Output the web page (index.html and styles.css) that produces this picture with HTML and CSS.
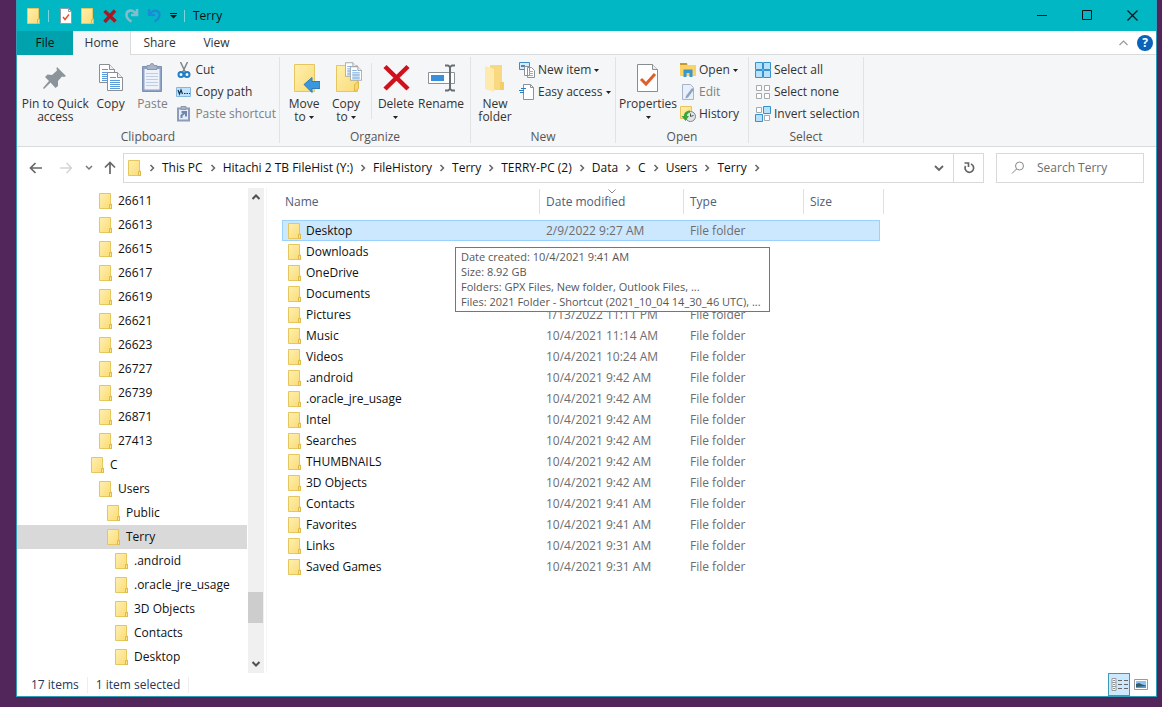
FILE: index.html
```html
<!DOCTYPE html>
<html lang="en">
<head>
    <meta charset="UTF-8">
    <meta name="viewport" content="width=device-width, initial-scale=1.0">
    <title>Terry</title>
    <link rel="stylesheet" href="styles.css">
</head>
<body>
    <svg class="sprite" aria-hidden="true">
        <linearGradient id="fold" x1="0" y1="0" x2="1" y2="1">
            <stop offset="0" stop-color="#fff0b0"/>
            <stop offset="1" stop-color="#fadb74"/>
        </linearGradient>
        <symbol id="folder" viewBox="0 0 14 16">
            <path d="M.5 .5h11v10.500h1v4.500H.5z" fill="url(#fold)" stroke="#e6c65f"/>
            <path d="M10.500 15.500v-4h2v4z" fill="#fbe38f" stroke="#dfb847"/>
        </symbol>
        <symbol id="chevron" viewBox="0 0 8 8">
            <path d="M2.500 1l3 3-3 3" fill="none" stroke="#666" stroke-width="1.500"/>
        </symbol>
        <symbol id="page" viewBox="0 0 16 19">
            <path d="M.5 .5h10l5 5v13H.5z" fill="#fff" stroke="#8b8f94"/>
            <path d="M10.500 .5v5h5" fill="#eee" stroke="#8b8f94"/>
            <path d="M3 5.500h6M3 8.500h10M3 10.500h10M3 12.500h10M3 14.500h10M3 16.500h10" stroke="#5b9bd8"/>
        </symbol>
        <symbol id="caret" viewBox="0 0 5 3">
            <path d="M0 0h5L2.500 3z" fill="#222"/>
        </symbol>
    </svg>

    <div class="window">
        <header class="titlebar">
            <svg class="folder" role="img"><use href="#folder"/></svg>
            <span class="title-sep first"></span>
            <button class="qat" aria-label="Properties">
                <svg width="14" height="16" viewBox="0 0 14 16"><path d="M1.500 .5h8l3 3v12h-11z" fill="#fff" stroke="#8ba0a8"/><path d="M9.500 .5v3h3" fill="none" stroke="#8ba0a8"/><path d="M4 9l2 2.500 4-5" fill="none" stroke="#e0552a" stroke-width="1.500"/></svg>
            </button>
            <button class="qat" aria-label="New folder"><svg class="folder"><use href="#folder"/></svg></button>
            <button class="qat" aria-label="Delete">
                <svg width="14" height="14" viewBox="0 0 14 14"><path d="M1.500 2l11 10.500M12 1.500L1.500 13" stroke="#a81824" stroke-width="3.500"/></svg>
            </button>
            <button class="qat" aria-label="Redo">
                <svg width="14" height="15" viewBox="0 0 14 15"><path d="M12 1v6H6M11.500 6.500C7 0 1.500 2.500 1.500 7c0 3 2 5 5 6.500" fill="none" stroke="#85bccb" stroke-width="2.600"/></svg>
            </button>
            <button class="qat" aria-label="Undo">
                <svg width="14" height="15" viewBox="0 0 14 15"><path d="M2 1v6h6M2.500 6.500C7 0 12.500 2.500 12.500 7c0 3-2 5-5 6.500" fill="none" stroke="#1b8bd6" stroke-width="2.200"/></svg>
            </button>
            <button class="qat last" aria-label="Customize toolbar">
                <svg width="7" height="6" viewBox="0 0 7 6"><path d="M0 .5h7" stroke="#111"/><path d="M0 2h7L3.500 5.500z" fill="#111"/></svg>
            </button>
            <span class="title-sep"></span>
            <span class="title">Terry</span>
            <button class="win-btn" aria-label="Minimize"><svg width="11" height="11"><path d="M0 5.500h10" stroke="#111"/></svg></button>
            <button class="win-btn" aria-label="Maximize"><svg width="11" height="11"><path d="M.5 .5h9v9h-9z" fill="none" stroke="#111"/></svg></button>
            <button class="win-btn" aria-label="Close"><svg width="11" height="11"><path d="M.5 .5l10 10M10.500 .5l-10 10" stroke="#111" stroke-width="1.200"/></svg></button>
        </header>

        <nav class="tabs">
            <button class="tab file">File</button>
            <button class="tab active">Home</button>
            <button class="tab">Share</button>
            <button class="tab">View</button>
            <button class="collapse" aria-label="Collapse ribbon"><svg width="9" height="6"><path d="M.5 5l4-4 4 4" fill="none" stroke="#999" stroke-width="1.200"/></svg></button>
            <button class="help" aria-label="Help">?</button>
        </nav>

        <section class="ribbon">
            <div class="group clipboard">
                <div class="tools">
                    <button class="big pin">
                        <svg width="32" height="32" viewBox="0 0 32 32"><path d="M18 5l9 9-2 1-2-.5-4 4.500 0 5-2.500 2-5-5.500L5 27l-1-1 6-7-4-4 2.500-2.500 4.500.5 5-4.500-.5-2z" fill="#8b949b"/></svg>
                        <span>Pin to Quick<br>access</span>
                    </button>
                    <button class="big">
                        <svg width="32" height="32" viewBox="0 0 32 32"><use href="#page" x="4" y="2" width="16" height="19"/><use href="#page" x="12" y="10" width="16" height="19"/></svg>
                        <span>Copy</span>
                    </button>
                    <button class="big disabled">
                        <svg width="32" height="32" viewBox="0 0 32 32"><path d="M6.500 4.500h19v25h-19z" fill="#8fa3c4" stroke="#7e90b2"/><path d="M8.500 7h15v20.500h-15z" fill="#eef2fa"/><path d="M11 3.500h3a2 2 0 0 1 4 0h3v4H11z" fill="#a9b4c6" stroke="#8d98ac"/><path d="M10 11.500h12M10 14.500h12M10 17.500h12M10 20.500h12M10 23.500h12" stroke="#c0ccdf"/></svg>
                        <span>Paste</span>
                    </button>
                    <div class="smalls">
                        <button class="small">
                            <svg width="16" height="16" viewBox="0 0 16 16"><path d="M4.500 0l5 10.500M11.500 0l-5 10.500" stroke="#7d858c" stroke-width="1.500"/><ellipse cx="5" cy="12.500" rx="2.500" ry="2.500" fill="none" stroke="#1e7fc6" stroke-width="2"/><ellipse cx="11" cy="12.500" rx="2.500" ry="2.500" fill="none" stroke="#1e7fc6" stroke-width="2"/></svg>
                            Cut
                        </button>
                        <button class="small">
                            <svg width="16" height="16" viewBox="0 0 16 16"><path d="M.5 3.500h14v9H.5z" fill="#c0e2fa" stroke="#82b8e0"/><path d="M2 6l1.500 4L5 6l1.500 4" fill="none" stroke="#14344e" stroke-width="1.200"/><path d="M8 9.500h1.500M10.500 9.500H12M13 9.500h1" stroke="#14344e"/></svg>
                            Copy path
                        </button>
                        <button class="small disabled">
                            <svg width="16" height="16" viewBox="0 0 16 16"><path d="M2 2.500h11v12H2z" fill="#e8eef8" stroke="#8c9cbc" stroke-width="2"/><path d="M5 .5h5v3H5z" fill="#a9b4c6" stroke="#8d98ac"/><path d="M5.500 12V9.500L9 6.500M5.500 6h4.500v4.500" fill="none" stroke="#6f86b0" stroke-width="2"/></svg>
                            Paste shortcut
                        </button>
                    </div>
                </div>
                <div class="group-name">Clipboard</div>
            </div>

            <div class="group organize">
                <div class="tools">
                    <button class="big">
                        <svg width="32" height="32" viewBox="0 0 32 32"><path d="M6.500 2.500h20v27h-20z" fill="url(#fold)" stroke="#e6c65f"/><path d="M16 22.500l8-7v4h8v7h-8v4z" fill="#3a96dd" stroke="#2b7dbd"/></svg>
                        <span>Move<br>to <svg class="caret"><use href="#caret"/></svg></span>
                    </button>
                    <button class="big">
                        <svg width="32" height="32" viewBox="0 0 32 32"><path d="M6.500 3.500h21v26h-21z" fill="url(#fold)" stroke="#e6c65f"/><path d="M24.500 29.500v-7l4-3v7z" fill="#f7d774" stroke="#dfb847"/><use href="#page" x="15" y="0" width="12" height="15"/><use href="#page" x="20" y="4" width="12" height="15"/></svg>
                        <span>Copy<br>to <svg class="caret"><use href="#caret"/></svg></span>
                    </button>
                    <span class="tool-sep"></span>
                    <button class="big">
                        <svg width="32" height="32" viewBox="0 0 32 32"><path d="M5 4.500L28 27M28 4.500L5 27" stroke="#d0101c" stroke-width="4.500"/></svg>
                        <span>Delete<br><svg class="caret"><use href="#caret"/></svg></span>
                    </button>
                    <button class="big rename">
                        <svg width="32" height="32" viewBox="0 0 32 32"><path d="M3.500 10.500h26v11h-26z" fill="#fff" stroke="#8b9299"/><path d="M6 13h13v6H6z" fill="#3a8fdc"/><path d="M20 3.500h3l2 1.500 2-1.500h3M20 28.500h3l2-1.500 2 1.500h3M25 5v22" fill="none" stroke="#666d73" stroke-width="2"/></svg>
                        <span>Rename</span>
                    </button>
                </div>
                <div class="group-name">Organize</div>
            </div>

            <div class="group new">
                <div class="tools">
                    <button class="big">
                        <svg width="32" height="32" viewBox="0 0 32 32"><path d="M11 3h12v18l2 1v6H11z" fill="#f8d980"/><path d="M6 4l9 3v23l-9-3z" fill="#fdeaac"/><path d="M21 20h4v8h-4z" fill="#f3cd68"/></svg>
                        <span>New<br>folder</span>
                    </button>
                    <div class="smalls">
                        <button class="small">
                            <svg width="16" height="16" viewBox="0 0 16 16"><path d="M.5 .5h10v7H.5z" fill="#d6ecfb" stroke="#3e8cc7"/><path d="M2 3h4v2H2z" fill="#3e8cc7"/><path d="M5.500 4.500h5v9h-5zM8.500 5.500h4l3 3v7h-7z" fill="#fff" stroke="#8b9299"/><path d="M10 9.500h4M10 11.500h4M10 13.500h4" stroke="#d894a4"/></svg>
                            New item <svg class="caret"><use href="#caret"/></svg>
                        </button>
                        <button class="small">
                            <svg width="16" height="16" viewBox="0 0 16 16"><path d="M4.500 .5h7l3 3v12h-10z" fill="#fff" stroke="#8b9299"/><path d="M11.500 .5v3h3" fill="none" stroke="#8b9299"/><path d="M2 4.500h5M0 6.500h5M1 8.500h4" stroke="#2b7dbd"/></svg>
                            Easy access <svg class="caret"><use href="#caret"/></svg>
                        </button>
                    </div>
                </div>
                <div class="group-name">New</div>
            </div>

            <div class="group open">
                <div class="tools">
                    <button class="big properties">
                        <svg width="32" height="32" viewBox="0 0 32 32"><path d="M5.500 2.500h15l5 5v22h-20z" fill="#fff" stroke="#888d92"/><path d="M20.500 2.500v5h5" fill="#eee" stroke="#888d92"/><path d="M9 17l5 5 9-10" fill="none" stroke="#dd5f2c" stroke-width="3"/></svg>
                        <span>Properties<br><svg class="caret"><use href="#caret"/></svg></span>
                    </button>
                    <div class="smalls">
                        <button class="small">
                            <svg width="16" height="16" viewBox="0 0 16 16"><path d="M0 1h7l1 2h8v11H0z" fill="#f9d364"/><path d="M0 1h7v2H0z" fill="#c99634"/><path d="M3.500 15V7.500h9V15h-3v-4h-3v4z" fill="#3a96cd"/></svg>
                            Open <svg class="caret"><use href="#caret"/></svg>
                        </button>
                        <button class="small disabled">
                            <svg width="16" height="16" viewBox="0 0 16 16"><path d="M2.500 .5h8l3 3v12h-11z" fill="#e9eff8" stroke="#a5b3cc"/><path d="M6 12l6-8 2 1.500-6 8-2.500 1z" fill="#8ea4c4"/></svg>
                            Edit
                        </button>
                        <button class="small">
                            <svg width="16" height="16" viewBox="0 0 16 16"><path d="M.5 .5h11v12H.5z" fill="url(#fold)" stroke="#e6c65f"/><circle cx="10.500" cy="10.500" r="5" fill="#dfe5e7" stroke="#79858c"/><path d="M10.500 7.500v3l3-1" fill="none" stroke="#555"/><path d="M10 4.500C4 5 4 9 4 10H1.500l4 5 3.500-5H7c0-2 1-3 3-3.500z" fill="#3da43d"/></svg>
                            History
                        </button>
                    </div>
                </div>
                <div class="group-name">Open</div>
            </div>

            <div class="group select">
                <div class="tools">
                    <div class="smalls">
                        <button class="small">
                            <svg width="16" height="16" viewBox="0 0 16 16"><path d="M.5 .5h7v7h-7zM8.500 .5h7v7h-7zM.5 8.500h7v7h-7zM8.500 8.500h7v7h-7z" fill="#b8e2fb" stroke="#3592cf"/></svg>
                            Select all
                        </button>
                        <button class="small">
                            <svg width="16" height="16" viewBox="0 0 16 16"><path d="M1.500 1.500h5v5h-5zM9.500 1.500h5v5h-5zM1.500 9.500h5v5h-5zM9.500 9.500h5v5h-5z" fill="#fff" stroke="#a6a9ac"/></svg>
                            Select none
                        </button>
                        <button class="small">
                            <svg width="16" height="16" viewBox="0 0 16 16"><path d="M1.500 1.500h5v5h-5zM9.500 9.500h5v5h-5z" fill="#fff" stroke="#a6a9ac"/><path d="M8.500 .5h7v7h-7zM.5 8.500h7v7h-7z" fill="#b8e2fb" stroke="#3592cf"/></svg>
                            Invert selection
                        </button>
                    </div>
                </div>
                <div class="group-name">Select</div>
            </div>
        </section>

        <div class="navbar">
            <button class="nav-btn" aria-label="Back"><svg width="14" height="12" viewBox="0 0 14 12"><path d="M13 6H2M6.500 1l-5 5 5 5" fill="none" stroke="#666" stroke-width="1.700"/></svg></button>
            <button class="nav-btn forward" aria-label="Forward"><svg width="14" height="12" viewBox="0 0 14 12"><path d="M1 6h11M7.500 1l5 5-5 5" fill="none" stroke="#d5d5d5" stroke-width="1.500"/></svg></button>
            <button class="nav-btn recent" aria-label="Recent locations"><svg width="8" height="6" viewBox="0 0 8 6"><path d="M1 1l3 3 3-3" fill="none" stroke="#777" stroke-width="1.500"/></svg></button>
            <button class="nav-btn up" aria-label="Up"><svg width="12" height="14" viewBox="0 0 12 14"><path d="M6 13V2M1 6.500l5-5 5 5" fill="none" stroke="#666" stroke-width="1.700"/></svg></button>
            <div class="address">
                <svg class="folder"><use href="#folder"/></svg>
                <svg class="chevron"><use href="#chevron"/></svg>
                <a href="#">This PC</a>
                <svg class="chevron"><use href="#chevron"/></svg>
                <a href="#">Hitachi 2 TB FileHist (Y:)</a>
                <svg class="chevron"><use href="#chevron"/></svg>
                <a href="#">FileHistory</a>
                <svg class="chevron"><use href="#chevron"/></svg>
                <a href="#">Terry</a>
                <svg class="chevron"><use href="#chevron"/></svg>
                <a href="#">TERRY-PC (2)</a>
                <svg class="chevron"><use href="#chevron"/></svg>
                <a href="#">Data</a>
                <svg class="chevron"><use href="#chevron"/></svg>
                <a href="#">C</a>
                <svg class="chevron"><use href="#chevron"/></svg>
                <a href="#">Users</a>
                <svg class="chevron"><use href="#chevron"/></svg>
                <a href="#">Terry</a>
                <svg class="chevron"><use href="#chevron"/></svg>
                <button class="history" aria-label="Previous locations"><svg width="10" height="8" viewBox="0 0 10 8"><path d="M1 2l4 4 4-4" fill="none" stroke="#666" stroke-width="1.900"/></svg></button>
                <button class="refresh" aria-label="Refresh"><svg width="12" height="13" viewBox="0 0 12 13"><path d="M8 3a4.300 4.300 0 1 1-5.500 2M1.500 2h4v4" fill="none" stroke="#666" stroke-width="1.700"/></svg></button>
            </div>
            <label class="search">
                <svg width="14" height="14" viewBox="0 0 14 14"><circle cx="8.500" cy="5" r="4" fill="none" stroke="#888"/><path d="M5.500 8L1 12.500" stroke="#888"/></svg>
                <input type="text" placeholder="Search Terry" aria-label="Search Terry">
            </label>
        </div>

        <main class="content">
            <ul class="tree">
                <li class="level-2"><svg class="folder"><use href="#folder"/></svg>26611</li>
                <li class="level-2"><svg class="folder"><use href="#folder"/></svg>26613</li>
                <li class="level-2"><svg class="folder"><use href="#folder"/></svg>26615</li>
                <li class="level-2"><svg class="folder"><use href="#folder"/></svg>26617</li>
                <li class="level-2"><svg class="folder"><use href="#folder"/></svg>26619</li>
                <li class="level-2"><svg class="folder"><use href="#folder"/></svg>26621</li>
                <li class="level-2"><svg class="folder"><use href="#folder"/></svg>26623</li>
                <li class="level-2"><svg class="folder"><use href="#folder"/></svg>26727</li>
                <li class="level-2"><svg class="folder"><use href="#folder"/></svg>26739</li>
                <li class="level-2"><svg class="folder"><use href="#folder"/></svg>26871</li>
                <li class="level-2"><svg class="folder"><use href="#folder"/></svg>27413</li>
                <li class="level-1"><svg class="folder"><use href="#folder"/></svg>C</li>
                <li class="level-2"><svg class="folder"><use href="#folder"/></svg>Users</li>
                <li class="level-3"><svg class="folder"><use href="#folder"/></svg>Public</li>
                <li class="level-3 current"><svg class="folder"><use href="#folder"/></svg>Terry</li>
                <li class="level-4"><svg class="folder"><use href="#folder"/></svg>.android</li>
                <li class="level-4"><svg class="folder"><use href="#folder"/></svg>.oracle_jre_usage</li>
                <li class="level-4"><svg class="folder"><use href="#folder"/></svg>3D Objects</li>
                <li class="level-4"><svg class="folder"><use href="#folder"/></svg>Contacts</li>
                <li class="level-4"><svg class="folder"><use href="#folder"/></svg>Desktop</li>
            </ul>
            <div class="scrollbar">
                <button aria-label="Scroll up"><svg width="10" height="8" viewBox="0 0 10 8"><path d="M1.500 6L5 2.500 8.500 6" fill="none" stroke="#505050" stroke-width="2"/></svg></button>
                <span class="track-above"></span>
                <span class="thumb"></span>
                <span class="track-below"></span>
                <button aria-label="Scroll down"><svg width="10" height="8" viewBox="0 0 10 8"><path d="M1.500 2L5 5.500 8.500 2" fill="none" stroke="#505050" stroke-width="2"/></svg></button>
            </div>
            <div class="files">
                <table>
                    <thead>
                        <tr>
                            <th class="col-name">Name</th>
                            <th class="col-date">Date modified<svg class="sort" width="8" height="5"><path d="M.5 .5l3.500 3.500 3.500-3.500" fill="none" stroke="#888"/></svg></th>
                            <th class="col-type">Type</th>
                            <th class="col-size">Size</th>
                        </tr>
                    </thead>
                    <tbody>
                        <tr class="selected"><td><svg class="folder"><use href="#folder"/></svg>Desktop</td><td>2/9/2022 9:27 AM</td><td>File folder</td><td></td></tr>
                        <tr><td><svg class="folder"><use href="#folder"/></svg>Downloads</td><td></td><td></td><td></td></tr>
                        <tr><td><svg class="folder"><use href="#folder"/></svg>OneDrive</td><td></td><td></td><td></td></tr>
                        <tr><td><svg class="folder"><use href="#folder"/></svg>Documents</td><td></td><td></td><td></td></tr>
                        <tr><td><svg class="folder"><use href="#folder"/></svg>Pictures</td><td>1/13/2022 11:11 PM</td><td>File folder</td><td></td></tr>
                        <tr><td><svg class="folder"><use href="#folder"/></svg>Music</td><td>10/4/2021 11:14 AM</td><td>File folder</td><td></td></tr>
                        <tr><td><svg class="folder"><use href="#folder"/></svg>Videos</td><td>10/4/2021 10:24 AM</td><td>File folder</td><td></td></tr>
                        <tr><td><svg class="folder"><use href="#folder"/></svg>.android</td><td>10/4/2021 9:42 AM</td><td>File folder</td><td></td></tr>
                        <tr><td><svg class="folder"><use href="#folder"/></svg>.oracle_jre_usage</td><td>10/4/2021 9:42 AM</td><td>File folder</td><td></td></tr>
                        <tr><td><svg class="folder"><use href="#folder"/></svg>Intel</td><td>10/4/2021 9:42 AM</td><td>File folder</td><td></td></tr>
                        <tr><td><svg class="folder"><use href="#folder"/></svg>Searches</td><td>10/4/2021 9:42 AM</td><td>File folder</td><td></td></tr>
                        <tr><td><svg class="folder"><use href="#folder"/></svg>THUMBNAILS</td><td>10/4/2021 9:42 AM</td><td>File folder</td><td></td></tr>
                        <tr><td><svg class="folder"><use href="#folder"/></svg>3D Objects</td><td>10/4/2021 9:42 AM</td><td>File folder</td><td></td></tr>
                        <tr><td><svg class="folder"><use href="#folder"/></svg>Contacts</td><td>10/4/2021 9:41 AM</td><td>File folder</td><td></td></tr>
                        <tr><td><svg class="folder"><use href="#folder"/></svg>Favorites</td><td>10/4/2021 9:41 AM</td><td>File folder</td><td></td></tr>
                        <tr><td><svg class="folder"><use href="#folder"/></svg>Links</td><td>10/4/2021 9:31 AM</td><td>File folder</td><td></td></tr>
                        <tr><td><svg class="folder"><use href="#folder"/></svg>Saved Games</td><td>10/4/2021 9:31 AM</td><td>File folder</td><td></td></tr>
                    </tbody>
                </table>
                <div class="tooltip" role="tooltip">
                    Date created: 10/4/2021 9:41 AM<br>
                    Size: 8.92 GB<br>
                    Folders: GPX Files, New folder, Outlook Files, ...<br>
                    Files: 2021 Folder - Shortcut (2021_10_04 14_30_46 UTC), ...
                </div>
            </div>
        </main>

        <footer class="statusbar">
            <span class="count">17 items</span>
            <span class="count">1 item selected</span>
            <button class="view-btn on" aria-label="Details view"><svg width="17" height="13" viewBox="0 0 17 13"><path d="M1 .5h4v12H1zM1 4.500h4M1 8.500h4" fill="#fff" stroke="#999"/><path d="M3 2v1M3 6v1M3 10v1" stroke="#222"/><path d="M7 2.500h4M13 2.500h4M7 6.500h4M13 6.500h4M7 10.500h4M13 10.500h4" stroke="#666"/></svg></button>
            <button class="view-btn" aria-label="Large icons view"><svg width="14" height="11" viewBox="0 0 14 11"><path d="M.5 .5h13v10H.5z" fill="#fff" stroke="#999"/><path d="M2 2h10v7H2z" fill="#8fc3ee"/><path d="M2 5l3-1 3 1.500 4 1V9H2z" fill="#2d5c6b"/><path d="M2 8l10-1v2H2z" fill="#5f9bd0"/></svg></button>
        </footer>
    </div>
</body>
</html>
```

FILE: styles.css
```css
* {
    box-sizing: border-box;
}

body {
    font-family: "Segoe UI", "Open Sans", "Noto Sans", sans-serif;
    font-size: 12px;
    line-height: 16px;
    margin: 0;
    padding: 0 5px 10px 16px;
    height: 100vh;
    color: #111;
    background-color: #52265a;
}

button {
    font: inherit;
    color: inherit;
    padding: 0;
    border: none;
    background: none;
    display: flex;
    align-items: center;
    justify-content: center;
    white-space: nowrap;
}

svg {
    flex: none;
}

.sprite {
    position: absolute;
    width: 0;
    height: 0;
}

.folder {
    width: 14px;
    height: 16px;
}

.caret {
    width: 5px;
    height: 3px;
    vertical-align: middle;
}

.window {
    display: flex;
    flex-direction: column;
    height: 100%;
    background-color: #fff;
    border: 1px solid #2f9db5;
    border-top: none;
}

/* title bar */
.titlebar {
    display: flex;
    align-items: center;
    height: 31px;
    padding-left: 10px;
    padding-right: 1px;
    background-color: #00b7c3;
}

.title-sep {
    width: 1px;
    height: 12px;
    background-color: #7fd5dc;
}

.title-sep.first {
    margin: 0 6px 0 7px;
}

.qat {
    width: 22px;
    height: 22px;
}

.qat.last {
    width: 16px;
    margin-right: 3px;
}

.title {
    flex: 1;
    padding-left: 8px;
}

.win-btn {
    width: 45px;
    height: 31px;
}

/* tabs */
.tabs {
    display: flex;
    align-items: center;
    height: 24px;
    border-bottom: 1px solid #dadbdc;
}

.tab {
    width: 57px;
    height: 24px;
    margin-bottom: -1px;
    color: #333;
}

.tab.file {
    width: 56px;
    color: #111;
    background-color: #00a2ad;
}

.tab.active {
    width: 58px;
    background-color: #f5f6f7;
    border-right: 1px solid #dadbdc;
}

.collapse {
    margin-left: auto;
    margin-right: 9px;
}

.help {
    width: 16px;
    height: 16px;
    margin-right: 3px;
    color: #fff;
    font-weight: bold;
    border-radius: 50%;
    background-color: #0a63b8;
}

/* ribbon */
.ribbon {
    display: flex;
    height: 92px;
    padding: 2px 0 3px;
    color: #333;
    background-color: #f5f6f7;
    border-bottom: 1px solid #dadbdc;
}

.group {
    display: flex;
    flex-direction: column;
    border-right: 1px solid #e2e3e4;
}

.tools {
    display: flex;
    flex: 1;
    padding: 4px 3px 0;
}

.group-name {
    text-align: center;
    color: #555;
    margin-bottom: -2px;
}

.clipboard {
    width: 263px;
}

.organize {
    width: 191px;
}

.new {
    width: 145px;
}

.open {
    width: 133px;
}

.select {
    width: 115px;
}

.big {
    width: 42px;
    height: 66px;
    flex-direction: column;
    justify-content: flex-start;
    padding-top: 1px;
    line-height: 13px;
    text-align: center;
}

.big > svg {
    margin-bottom: 3px;
}

.clipboard .tools {
    padding-left: 4px;
}

.big.pin {
    width: 69px;
}

.big.rename {
    width: 48px;
}

.big.properties {
    width: 58px;
}

.tool-sep {
    width: 1px;
    height: 56px;
    margin: 2px 3px 0 4px;
    background-color: #e2e3e4;
}

.smalls {
    margin-top: -2px;
    padding-left: 3px;
}

.small {
    height: 22px;
    gap: 3px;
}

/* address row */
.disabled {
    color: #7d7f82;
}

.navbar {
    display: flex;
    align-items: center;
    height: 41px;
    padding: 0 12px 0 8px;
}

.nav-btn {
    width: 22px;
    height: 22px;
}

.nav-btn.forward {
    margin-left: 8px;
}

.nav-btn.recent {
    width: 16px;
    margin-left: 4px;
}

.nav-btn.up {
    margin-left: 2px;
    margin-right: 2px;
}

.address {
    display: flex;
    align-items: center;
    flex: 1;
    height: 30px;
    padding-left: 4px;
    border: 1px solid #d9d9d9;
}

.address a {
    color: #111;
    text-decoration: none;
    white-space: nowrap;
}

.chevron {
    width: 8px;
    height: 8px;
    margin: 0 6px;
}

.history {
    width: 28px;
    height: 28px;
    margin-left: auto;
}

.refresh {
    width: 30px;
    height: 28px;
    border-left: 1px solid #d9d9d9;
}

.search {
    display: flex;
    align-items: center;
    width: 148px;
    height: 30px;
    margin-left: 12px;
    padding-left: 14px;
    gap: 12px;
    border: 1px solid #d9d9d9;
}

.search input {
    flex: 1;
    min-width: 0;
    padding: 0;
    font: inherit;
    border: none;
    outline: none;
}

.search input::placeholder {
    color: #6d6d6d;
}

/* tree and files */
.content {
    display: flex;
    flex: 1;
    min-height: 0;
}

.tree {
    width: 230px;
    margin: 0;
    padding: 1px 0 0;
    list-style: none;
    overflow: hidden;
}

.tree li {
    display: flex;
    align-items: center;
    gap: 5px;
    height: 24px;
}

.level-1 {
    padding-left: 74px;
}

.level-2 {
    padding-left: 82px;
}

.level-3 {
    padding-left: 90px;
}

.level-4 {
    padding-left: 98px;
}

.tree .current {
    background-color: #d9d9d9;
}

.scrollbar {
    display: flex;
    flex-direction: column;
    width: 16px;
    margin-left: 1px;
    background-color: #f0f0f0;
}

.scrollbar button {
    height: 18px;
}

.track-above {
    flex: 12;
}

.thumb {
    width: 15px;
    height: 31px;
    background-color: #cdcdcd;
}

.track-below {
    flex: 1;
}

.files {
    position: relative;
    flex: 1;
    margin-left: 2px;
    padding-left: 15px;
    border-left: 1px solid #f5f5f5;
}

table {
    border-collapse: collapse;
    table-layout: fixed;
    width: 598px;
}

th {
    position: relative;
    height: 27px;
    padding: 0 6px;
    text-align: left;
    font-weight: normal;
    color: #4c607a;
}

/* separators between the column headers */
th::after {
    content: "";
    position: absolute;
    top: 1px;
    right: 0;
    width: 1px;
    height: 25px;
    background-color: #e0e0e0;
}

thead::after {
    content: "";
    display: block;
    height: 5px;
}

.col-name {
    width: 258px;
    padding-left: 3px;
}

.col-date {
    width: 144px;
}

.col-type {
    width: 120px;
}

.col-size::after {
    right: -4px;
}

.sort {
    position: absolute;
    top: 1px;
    left: 50%;
    margin-left: -4px;
}

td {
    height: 21px;
    padding: 1px 6px 0;
    color: #6d6d6d;
    white-space: nowrap;
}

td:first-child {
    color: #111;
}

td .folder {
    margin-right: 4px;
    vertical-align: top;
}

.selected {
    background-color: #cce8ff;
    outline: 1px solid #99d1ff;
    outline-offset: -1px;
}

.tooltip {
    position: absolute;
    top: 59px;
    left: 188px;
    width: 315px;
    padding: 1px 5px 2px;
    font-size: 11px;
    line-height: 15px;
    white-space: nowrap;
    color: #575757;
    background-color: #fff;
    border: 1px solid #767676;
}

/* status bar */
.statusbar {
    display: flex;
    height: 23px;
    padding-right: 4px;
    padding-left: 14px;
    align-items: center;
    color: #1e395b;
}

.count {
    padding-right: 8px;
    margin-right: 8px;
    border-right: 1px solid #eee;
}

.view-btn {
    width: 22px;
    height: 23px;
}

.view-btn.on {
    margin-left: auto;
    background-color: #cce8ff;
    border: 1px solid #3c9ab8;
}
```
